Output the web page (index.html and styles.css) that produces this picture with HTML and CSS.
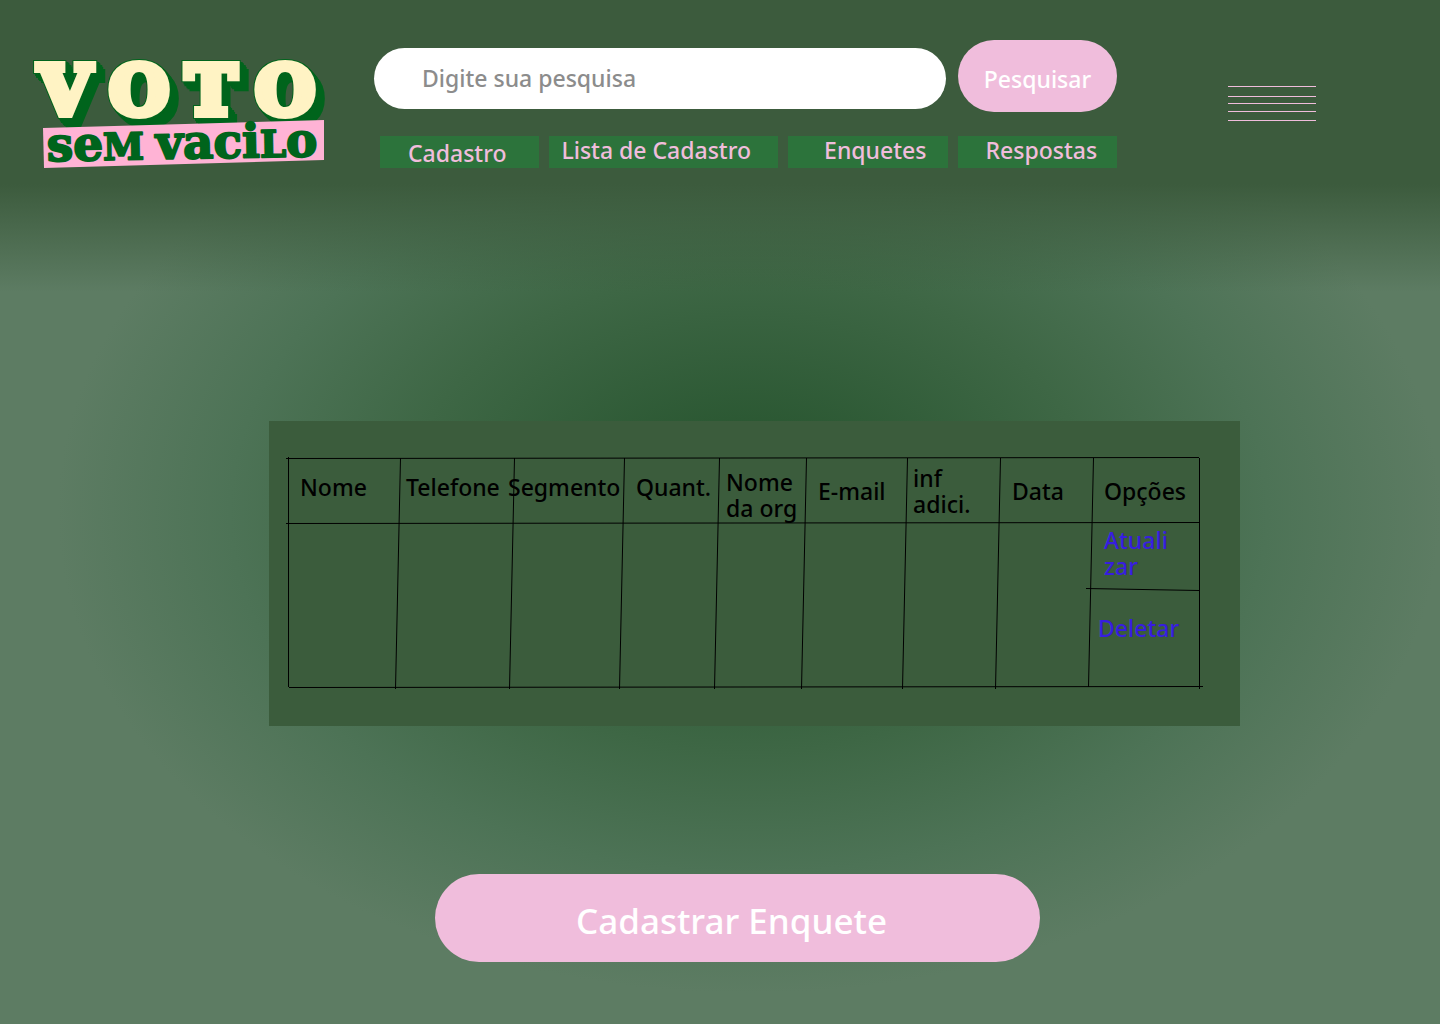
FILE: index.html
```html
<!DOCTYPE html>
<html lang="pt-BR">
<head>
<meta charset="utf-8">
<meta name="viewport" content="width=device-width, initial-scale=1">
<title>Voto Sem Vacilo</title>
<link rel="stylesheet" href="styles.css">
</head>
<body>
<header class="header">
  <a class="logo" href="#" aria-label="Voto sem vacilo">
    <svg viewBox="30 60 294 110" width="294" height="110">
      <defs>
        <g id="word" class="logo-word">
          <text x="65" y="114">V</text>
          <text x="139" y="114">O</text>
          <text x="211" y="114">T</text>
          <text x="285" y="114">O</text>
        </g>
        <g id="depth-2"><use href="#word"/><use href="#word" x="2" y="2"/></g>
        <g id="depth-4"><use href="#depth-2"/><use href="#depth-2" x="3" y="3"/></g>
      </defs>
      <g class="logo-depth">
        <use href="#depth-4"/>
        <use href="#depth-4" x="3" y="4"/>
      </g>
      <use class="logo-face" href="#word"/>
      <path class="logo-band" d="M43 128 L324 120 V160 L44 168 Z"/>
      <text class="logo-tagline" x="47" y="161" transform="rotate(-1 47 161)">se<tspan class="logo-cap">M</tspan></text>
      <text class="logo-tagline" x="156" y="159" transform="rotate(-1 156 159)">vaci<tspan class="logo-cap">L</tspan>o</text>
    </svg>
  </a>
  <div class="tools">
    <form class="search" role="search">
      <input class="search-input" type="search" placeholder="Digite sua pesquisa" aria-label="Digite sua pesquisa">
      <button class="search-button" type="submit">Pesquisar</button>
    </form>
    <nav class="nav">
      <a class="nav-link nav-link-low" href="#">Cadastro</a>
      <a class="nav-link nav-link-wide" href="#">Lista de Cadastro</a>
      <a class="nav-link nav-link-inset" href="#">Enquetes</a>
      <a class="nav-link" href="#">Respostas</a>
    </nav>
  </div>
  <button class="menu" type="button" aria-label="Menu">
    <svg viewBox="0 0 88 36" width="88" height="36"><path d="M0 .5H88M0 10.500H88M0 17.500H88M0 25.500H88M0 34.500H88"/></svg>
  </button>
</header>
<main class="main">
  <section class="card">
    <div class="sheet">
      <svg class="rules" viewBox="0 0 911 229" preserveAspectRatio="none" aria-hidden="true">
        <path d="M-2 .5L911 -.5M-2 65.500L911 64.500M1 229.500L915 228.500M.5 -1V229M911.500 0V231M112.500 0L107.500 231M226.500 0L221.500 231M336.500 0L331.500 231M431.500 0L426.500 231M518.500 0L513.500 231M619.500 0L614.500 231M712.500 0L707.500 231M805.500 0L800.500 229M798 130.500L911 132.500"/>
      </svg>
      <table class="table">
        <colgroup>
          <col class="w-name"><col class="w-phone"><col class="w-segment"><col class="w-count"><col class="w-org"><col class="w-mail"><col class="w-info"><col class="w-date"><col class="w-options">
        </colgroup>
        <thead>
          <tr>
            <th scope="col" class="raised">Nome</th>
            <th scope="col" class="raised tight">Telefone</th>
            <th scope="col" class="raised flush">Segmento</th>
            <th scope="col" class="raised">Quant.</th>
            <th scope="col" class="tight low">Nome<br>da org</th>
            <th scope="col">E-mail</th>
            <th scope="col" class="tight">inf<br>adici.</th>
            <th scope="col">Data</th>
            <th scope="col">Opções</th>
          </tr>
        </thead>
        <tbody>
          <tr class="row-update">
            <td rowspan="2"></td><td rowspan="2"></td><td rowspan="2"></td><td rowspan="2"></td><td rowspan="2"></td><td rowspan="2"></td><td rowspan="2"></td><td rowspan="2"></td>
            <td><a href="#">Atuali<br>zar</a></td>
          </tr>
          <tr class="row-delete">
            <td class="tight"><a href="#">Deletar</a></td>
          </tr>
        </tbody>
      </table>
    </div>
  </section>
  <button class="submit" type="button">Cadastrar Enquete</button>
</main>
</body>
</html>
```
FILE: styles.css
```css
* {
  box-sizing: border-box;
}

body {
  margin: 0;
  min-height: 100vh;
  font-family: "Noto Sans", "Open Sans", sans-serif;
  font-size: 23px;
  font-weight: 500;
  line-height: 26px;
  color: #000;
  background:
    linear-gradient(#3c5b3d 0, #3c5b3d 184px, rgba(60, 94, 61, 0) 292px),
    radial-gradient(ellipse 48% 47% at 52% 50%, #215029 0, #3e6745 50%, #4d7356 75%, #5d7c63 100%);
}

button,
input {
  font: inherit;
  border: 0;
}

.header {
  display: flex;
  align-items: flex-start;
  padding: 40px 124px 0 30px;
}

.logo {
  flex: none;
  margin: 20px 50px 0 0;
}

.logo svg,
.menu svg {
  display: block;
}

.logo svg {
  overflow: visible;
}

.logo-word {
  font: bold 68px "DejaVu Serif", serif;
  text-anchor: middle;
  stroke-linejoin: miter;
}

.logo-depth {
  fill: #00641c;
  stroke: #00641c;
  stroke-width: 10px;
}

.logo-face {
  fill: #fff3c4;
  stroke: #fff3c4;
  stroke-width: 8px;
}

.logo-band {
  fill: #ffb3d5;
}

.logo-tagline {
  font: bold 47px "DejaVu Serif", serif;
  fill: #00641c;
  stroke: #00641c;
  stroke-width: 2px;
  stroke-linejoin: round;
}

.logo-cap {
  font-size: 37px;
}

.tools {
  flex: 1;
  min-width: 0;
}

.search {
  display: flex;
  align-items: center;
  gap: 12px;
}

.search-input {
  flex: 1;
  min-width: 0;
  height: 61px;
  margin-top: 4px;
  padding: 0 48px;
  border-radius: 31px;
  background: #fff;
  appearance: none;
}

.search-input::placeholder {
  color: #8c8c8c;
  opacity: 1;
}

.search-button {
  width: 159px;
  height: 72px;
  padding: 6px 0 0;
  border-radius: 36px;
  background: #f0bddc;
  color: #fff;
}

.nav {
  display: grid;
  grid-template-columns: 159fr 228fr 159fr 159fr;
  gap: 10px;
  margin-top: 24px;
  padding-left: 6px;
}

.nav-link {
  height: 32px;
  padding-left: 28px;
  line-height: 28px;
  white-space: nowrap;
  text-decoration: none;
  color: #f0bddc;
  background: #2c733b;
}

.nav-link-low {
  line-height: 34px;
}

.nav-link-wide {
  padding-left: 12px;
}

.nav-link-inset {
  padding-left: 36px;
}

.menu {
  flex: none;
  margin: 46px 0 0 111px;
  padding: 0;
  background: none;
}

.menu path {
  stroke: #f0bddc;
}

.main {
  display: flex;
  flex-direction: column;
  padding: 251px 200px 62px 269px;
}

.card {
  padding: 37px 41px 39px 19px;
  background: #3b5c3c;
}

.sheet {
  position: relative;
}

.rules {
  position: absolute;
  inset: 0;
  width: 100%;
  height: 100%;
  overflow: visible;
  pointer-events: none;
}

.rules path {
  stroke: #000;
  vector-effect: non-scaling-stroke;
}

.table {
  width: 100%;
  table-layout: fixed;
  border-collapse: collapse;
}

.table th,
.table td {
  padding: 0 0 0 12px;
  font-weight: 500;
  text-align: left;
  white-space: nowrap;
}

.table thead tr {
  height: 65px;
}

.table .tight {
  padding-left: 6px;
}

.table .flush {
  padding-left: 0;
}

.table .raised {
  padding-bottom: 8px;
}

.table .low {
  vertical-align: bottom;
  padding-bottom: 2px;
}

.table a {
  color: #371de0;
  text-decoration: none;
}

.row-update {
  height: 66px;
}

.row-update td {
  vertical-align: top;
  padding-top: 4px;
}

.row-delete {
  height: 98px;
}

.row-delete td {
  padding-bottom: 20px;
}

.w-name { width: 112px; }
.w-phone { width: 108px; }
.w-segment { width: 116px; }
.w-count { width: 96px; }
.w-org { width: 86px; }
.w-mail { width: 101px; }
.w-info { width: 93px; }
.w-date { width: 92px; }
.w-options { width: 107px; }

.submit {
  align-self: center;
  width: 605px;
  max-width: 100%;
  min-height: 88px;
  margin: 148px 34px 0 0;
  padding: 6px 12px 0 0;
  border-radius: 44px;
  font-size: 35px;
  line-height: 44px;
  color: #fff;
  background: #f0bddc;
}
```
